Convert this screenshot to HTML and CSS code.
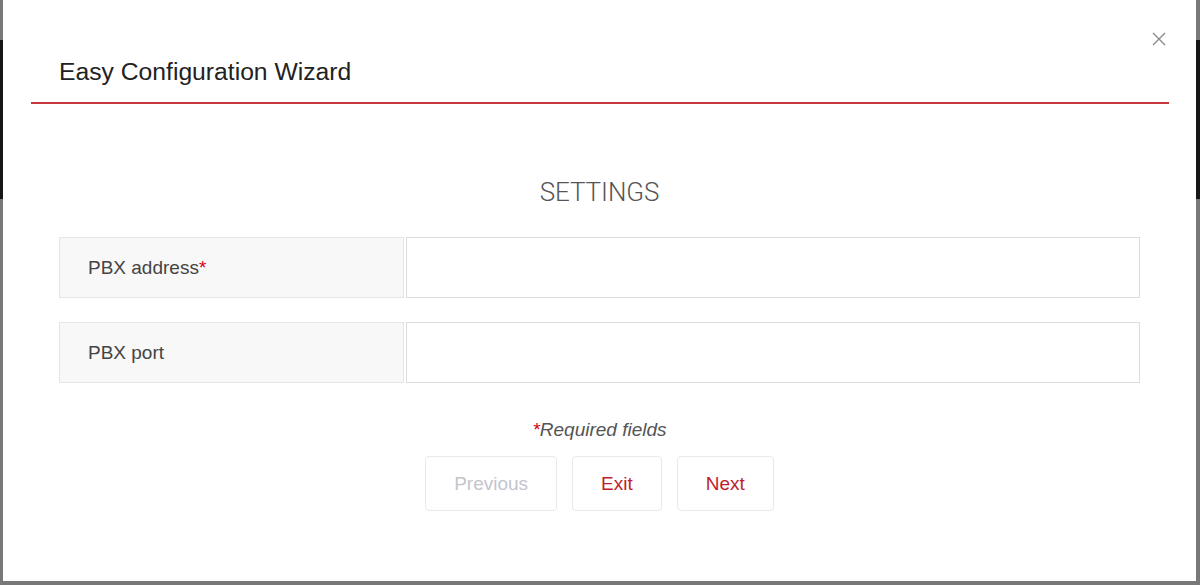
FILE: index.html
```html
<!DOCTYPE html>
<html>
<head>
<meta charset="utf-8">
<link rel="stylesheet" href="styles.css">
</head>
<body>
<div class="modal">
  <div class="modal-header">
    <h1 class="modal-title">Easy Configuration Wizard</h1>
    <button class="close" aria-label="Close">
      <svg width="14" height="14" viewBox="0 0 14 14"><path d="M1 1L13 13M13 1L1 13" stroke="#8a8a8a" stroke-width="1.4" fill="none"/></svg>
    </button>
  </div>
  <div class="modal-body">
    <h2 class="section-title">SETTINGS</h2>
    <div class="form">
      <div class="row">
        <label class="label">PBX address<span class="req">*</span></label>
        <input class="field" type="text">
      </div>
      <div class="row">
        <label class="label">PBX port</label>
        <input class="field" type="text">
      </div>
    </div>
    <p class="note"><span class="req">*</span>Required fields</p>
    <div class="actions">
      <button class="btn btn-disabled">Previous</button>
      <button class="btn">Exit</button>
      <button class="btn">Next</button>
    </div>
  </div>
</div>
</body>
</html>
```
FILE: styles.css
```css
html, body {
  margin: 0;
  height: 100%;
}
body {
  background: linear-gradient(to bottom, #787878 0, #787878 40px, #161616 40px, #161616 199px, #787878 199px);
  font-family: "Liberation Sans", Arial, sans-serif;
  padding: 0 4px 4px 3px;
  box-sizing: border-box;
  overflow: hidden;
}
.modal {
  background: #fff;
  height: 581px;
  box-sizing: border-box;
  padding: 0 27px 0 28px;
}
.modal-header {
  position: relative;
  border-bottom: 2px solid #c4373d;
  padding: 57px 28px 15px;
}
.modal-title {
  margin: 0;
  font-weight: normal;
  font-size: 24.7px;
  line-height: 30px;
  color: #222;
}
.close {
  position: absolute;
  right: 3px;
  top: 32px;
  background: none;
  border: 0;
  padding: 0;
  width: 14px;
  height: 14px;
  cursor: pointer;
}
.close svg { display: block; }
.modal-body {
  padding: 0 29px 0 28px;
}
.section-title {
  margin: 73px 0 30px;
  text-align: center;
  font-family: Roboto, "Liberation Sans", Arial, sans-serif;
  font-weight: 300;
  font-size: 26px;
  line-height: 30px;
  color: #555;
  letter-spacing: -0.1px;
}
.form {
  display: flex;
  flex-direction: column;
  gap: 24px;
}
.row {
  display: flex;
  gap: 2px;
  height: 61px;
}
.label {
  width: 345px;
  box-sizing: border-box;
  background: #f8f8f8;
  border: 1px solid #e6e6e6;
  display: flex;
  align-items: center;
  padding-left: 28px;
  font-size: 19px;
  color: #444;
}
.req { color: #d0021b; }
.field {
  flex: 1;
  box-sizing: border-box;
  border: 1px solid #dcdcdc;
  margin: 0;
  background: #fff;
  font-size: 18px;
  outline: none;
}
.note {
  margin: 36px 0 15px;
  text-align: center;
  font-style: italic;
  font-size: 19px;
  line-height: 22px;
  color: #555;
}
.actions {
  display: flex;
  justify-content: center;
  gap: 15px;
}
.btn {
  height: 55px;
  padding: 0 28px;
  background: #fff;
  border: 1px solid #e9e9e9;
  border-radius: 4px;
  font-family: "Liberation Sans", Arial, sans-serif;
  font-size: 19px;
  color: #bf1e2b;
  cursor: pointer;
}
.btn-disabled { color: #c4c4cc; }
```
